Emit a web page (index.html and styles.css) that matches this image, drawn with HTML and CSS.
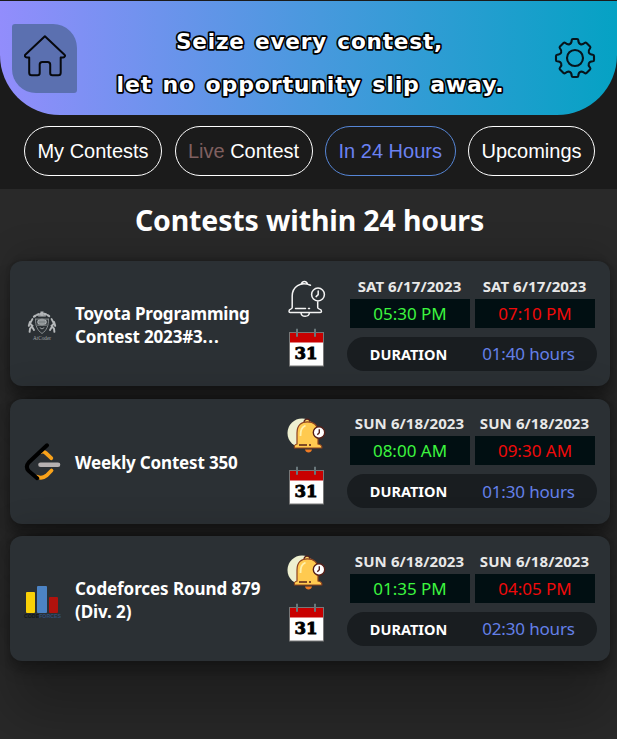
FILE: index.html
```html
<!DOCTYPE html>
<html lang="en">
<head>
<meta charset="utf-8">
<title>Contests</title>
<link rel="stylesheet" href="styles.css">
</head>
<body>
<svg class="defs" width="0" height="0" aria-hidden="true">
  <defs>
    <symbol id="calendar" viewBox="0 0 36 40">
      <rect x="1.5" y="4.5" width="34" height="33.5" fill="#fff" stroke="#777" stroke-width="1"/>
      <rect x="2" y="5" width="33" height="9.5" fill="#c80000"/>
      <path d="M9 .7v8M27 .7v8" stroke="#69777b" stroke-width="2"/>
      <text x="6.500" y="31" class="cal-day" textLength="23" lengthAdjust="spacingAndGlyphs">31</text>
    </symbol>
    <symbol id="bell-outline" viewBox="0 0 40 40">
      <g fill="none" stroke="#f4f4f4" stroke-width="1.5" stroke-linecap="round" stroke-linejoin="round">
        <path d="M14.5 4.7a3 3 0 0 1 5.8 0M23.5 6.2C13.5 1.8 5.2 8 5.2 17v11.5c0 2.2-3.2 1-3.2 3.7 0 .8.4 1.3 1.2 1.3h30c.8 0 1.3-.5 1.3-1.3 0-2.7-3.8-1.5-3.8-3.7V23M8.5 29.5h10M21.5 29.5h1M14 34c.6 4.3 7.7 4.3 8.4 0"/>
        <circle cx="31" cy="15.5" r="6.4"/>
        <path d="M31.2 12v3.6l-2.1 2"/>
      </g>
    </symbol>
    <symbol id="bell-color" viewBox="0 0 40 40">
      <circle cx="15" cy="16" r="14.5" fill="#eef0d0"/>
      <path d="M18 32.500c.6 4 6.400 4 7 0z" fill="#f07b24"/>
      <path d="M17 5.500c0-4.500 6-4.500 6 0" fill="#ffd66b" stroke="#562019" stroke-width="1.3"/>
      <path d="M10 27V16C10 8 14.500 4.800 20.500 4.800S31 8 31 16v11c3 .7 4.300 1.500 3.800 4H7.500C6.900 28.500 7.500 27.800 10 27z" fill="#ffca50" stroke="#8e421f" stroke-width="1.2"/>
      <path d="M13.500 19c0-6 1-8.500 5-10.500" fill="none" stroke="#fff0aa" stroke-width="1.8"/>
      <path d="M12 28h8M22 28h2" stroke="#562019" stroke-width="1.4"/>
      <circle cx="32" cy="15.500" r="5.700" fill="#fff" stroke="#562019" stroke-width="1.4"/>
      <path d="M32.300 12.300v3.400l-2 2" fill="none" stroke="#562019" stroke-width="1.4"/>
    </symbol>
  </defs>
</svg>

<header class="top">
  <div class="banner">
    <a class="home" aria-label="Home">
      <svg width="42" height="42" viewBox="0 0 42 42"><path d="M20.9 1.2 1.3 19.7c-1 1 0 2.7 1.5 2.7h2.4v15.3c0 1.6.9 2.5 2.5 2.5h5.8c1.3 0 2.2-.9 2.2-2.2V29.600c0-1.700.9-2.600 2.600-2.600h5.300c1.700 0 2.600.9 2.600 2.600V38c0 1.300.9 2.200 2.200 2.200h5.800c1.600 0 2.500-.9 2.500-2.500V22.400h2.500c1.500 0 2.400-1.700 1.300-2.700z" fill="none" stroke="#07090e" stroke-width="2" stroke-linejoin="round"/></svg>
    </a>
    <svg class="slogan" width="420" height="90" viewBox="0 0 420 90">
      <text x="74" y="36" textLength="267" lengthAdjust="spacingAndGlyphs">Seize every contest,</text>
      <text x="14.500" y="78.500" textLength="388" lengthAdjust="spacingAndGlyphs">let no opportunity slip away.</text>
    </svg>
    <svg class="gear" width="42" height="42" viewBox="-21 -21 42 42" fill="none" stroke="#07141b" stroke-width="2.1" stroke-linejoin="round">
      <circle r="8"/>
      <path d="M-2-19H2Q3.200-19 3.300-17.800 3.400-14.600 5.500-13.800 7.300-13 9.600-15 10.600-15.800 11.500-15L15-11.500Q15.800-10.600 15-9.600 13-7.300 13.800-5.500 14.600-3.400 17.800-3.300 19-3.200 19-2V2Q19 3.200 17.800 3.300 14.600 3.400 13.800 5.500 13 7.300 15 9.600 15.800 10.600 15 11.500L11.500 15Q10.600 15.800 9.600 15 7.300 13 5.500 13.800 3.400 14.600 3.300 17.800 3.200 19 2 19H-2Q-3.200 19-3.300 17.800-3.400 14.600-5.500 13.800-7.300 13-9.600 15-10.600 15.800-11.500 15L-15 11.500Q-15.800 10.600-15 9.600-13 7.300-13.800 5.500-14.600 3.400-17.800 3.300-19 3.200-19 2V-2Q-19-3.200-17.800-3.300-14.600-3.400-13.800-5.500-13-7.300-15-9.600-15.800-10.600-15-11.500L-11.500-15Q-10.600-15.800-9.600-15-7.300-13-5.500-13.800-3.400-14.600-3.300-17.800-3.200-19-2-19Z"/>
    </svg>
  </div>
  <nav class="tabs">
    <a class="tab tab-my">My Contests</a>
    <a class="tab tab-live"><span class="live">Live</span>&nbsp;Contest</a>
    <a class="tab tab-day active">In 24 Hours</a>
    <a class="tab tab-up">Upcomings</a>
  </nav>
</header>

<main>
  <h1>Contests within 24 hours</h1>
  <div class="list">
    <article class="card">
      <svg class="logo" width="40" height="44" viewBox="0 0 40 44">
        <g transform="translate(3 5.500) scale(.8)" fill="none" stroke="#b4b7b9" stroke-linecap="round">
          <path d="M10 11.500Q20 4 30 11.500" stroke-width="2.800" stroke-dasharray="2 2.600"/>
          <path d="M19 9V6h2v3M16 10.500h8" stroke-width="1.800"/>
          <path d="M12 14.500h16M12 14.500c-.5 8 2 14 8 18 6-4 8.500-10 8-18" stroke-width="1.200" stroke="#8c9193"/>
          <path d="M14.500 22h11M17.500 25.500q2.500 3 5 0" stroke-width="1"/>
          <path d="M8 14.500 5 20l3 3-3 3.500-.5 4M7 23l3 5M5 18l-1.500 5M32 14.500l3 5.500-3 3 3 3.500.5 4M33 23l-3 5M35 18l1.500 5" stroke-width="2.400"/>
        </g>
        <ellipse cx="19" cy="20" rx="5" ry="3.300" fill="#aeb2b4"/>
        <path d="M17 17v6M19 17v6M21 17v6M14 20h10" stroke="#5c6265" stroke-width=".6"/>
        <text x="10" y="38" class="logo-atcoder" textLength="18" lengthAdjust="spacingAndGlyphs">AtCoder</text>
      </svg>
      <h2>Toyota Programming<br>Contest 2023#3<span class="dots">...</span></h2>
      <div class="actions">
        <svg width="40" height="40"><use href="#bell-outline"/></svg>
        <svg class="cal" width="36" height="40"><use href="#calendar"/></svg>
      </div>
      <div class="when">
        <div class="slots">
          <div class="slot"><b>SAT 6/17/2023</b><span class="start">05:30 PM</span></div>
          <div class="slot"><b>SAT 6/17/2023</b><span class="end">07:10 PM</span></div>
        </div>
        <div class="duration"><b>DURATION</b><span>01:40 hours</span></div>
      </div>
    </article>

    <article class="card">
      <svg class="logo" width="40" height="44" viewBox="0 0 40 44" fill="none" stroke-linecap="round">
        <path d="M18 13q2.600-1 4.800 1l5.500 5.200M28.500 31.500l-5 5q-4.500 3.700-9.500 1.300" stroke="#f9a21a" stroke-width="3.800"/>
        <path d="M24 6.300 5.700 23.500q-3.700 4.200 0 8.400l8.500 7.300" stroke="#000" stroke-width="4"/>
        <path d="M17.500 25.700h17.500" stroke="#b6b1b1" stroke-width="4.600"/>
      </svg>
      <h2>Weekly Contest 350</h2>
      <div class="actions">
        <svg width="40" height="40"><use href="#bell-color"/></svg>
        <svg class="cal" width="36" height="40"><use href="#calendar"/></svg>
      </div>
      <div class="when">
        <div class="slots">
          <div class="slot"><b>SUN 6/18/2023</b><span class="start">08:00 AM</span></div>
          <div class="slot"><b>SUN 6/18/2023</b><span class="end">09:30 AM</span></div>
        </div>
        <div class="duration"><b>DURATION</b><span>01:30 hours</span></div>
      </div>
    </article>

    <article class="card">
      <svg class="logo" width="40" height="44" viewBox="0 0 40 44">
        <rect x="3" y="15" width="9" height="21" rx="1" fill="#f9d007"/>
        <rect x="14" y="9" width="10" height="27" rx="1" fill="#4c83c4"/>
        <rect x="26" y="20" width="9" height="16" rx="1" fill="#b1120d"/>
        <text x="1" y="41" class="logo-cf" textLength="37" lengthAdjust="spacingAndGlyphs"><tspan fill="#111619">CODE</tspan><tspan fill="#304e78">FORCES</tspan></text>
      </svg>
      <h2 class="wide">Codeforces Round 879<br>(Div. 2)</h2>
      <div class="actions">
        <svg width="40" height="40"><use href="#bell-color"/></svg>
        <svg class="cal" width="36" height="40"><use href="#calendar"/></svg>
      </div>
      <div class="when">
        <div class="slots">
          <div class="slot"><b>SUN 6/18/2023</b><span class="start">01:35 PM</span></div>
          <div class="slot"><b>SUN 6/18/2023</b><span class="end">04:05 PM</span></div>
        </div>
        <div class="duration"><b>DURATION</b><span>02:30 hours</span></div>
      </div>
    </article>
  </div>
</main>
</body>
</html>
```
FILE: styles.css
```css
* { box-sizing: border-box; }
html { background: #292929; }
body {
  margin: 0;
  height: 739px;
  overflow: hidden;
  background: #292929;
  color: #fff;
  font-family: "Noto Sans", "Open Sans", sans-serif;
}
.defs { display: block; height: 0; }
.top {
  height: 189px;
  padding-top: 1px;
  background: #1b1b1b;
}
.banner {
  display: flex;
  align-items: center;
  height: 114px;
  padding: 0 0 0 12px;
  border-radius: 0 0 60px 60px;
  background: linear-gradient(90deg, #928dfc, #4799dd 52%, #05a2c4);
}
.home {
  display: flex;
  align-items: center;
  justify-content: center;
  width: 65px;
  height: 69px;
  padding-bottom: 5px;
  border-radius: 3px 24px 3px 24px;
  background: #5b70b0;
}
.slogan { margin-left: 25px; }
.slogan text {
  font: bold 21.5px "DejaVu Sans", sans-serif;
  word-spacing: 2px;
  letter-spacing: .8px;
  fill: #fff;
  stroke: #000;
  stroke-width: 3.4px;
  stroke-linejoin: round;
  paint-order: stroke;
}
.gear { margin-left: 32px; }
.tabs {
  display: flex;
  gap: 12.5px;
  padding: 11px 0 0 24px;
}
.tab {
  display: flex;
  align-items: center;
  justify-content: center;
  height: 50px;
  border: 1px solid #fff;
  border-radius: 25px;
  font: 20px "Liberation Sans", Arial, sans-serif;
  white-space: nowrap;
}
.tab-my, .tab-live { width: 138px; }
.tab-day { width: 130.5px; }
.tab-up { width: 127px; }
.live { color: #806060; }
.active { color: #6b82f2; border-color: #5686d6; }
h1 {
  margin: 0;
  height: 72px;
  padding: 11px 0 0 2px;
  font-size: 28.5px;
  font-weight: 700;
  line-height: 40px;
  letter-spacing: -.14px;
  text-align: center;
}
.list {
  display: flex;
  flex-direction: column;
  gap: 12.5px;
  padding: 0 7px 0 10px;
}
.card {
  display: grid;
  grid-template-columns: 52px 212px 60px 250px;
  align-items: center;
  width: 600px;
  height: 125px;
  padding-left: 13px;
  border-radius: 12px;
  background: #2b3034;
  box-shadow: rgba(0, 0, 0, .25) 0 54px 55px, rgba(0, 0, 0, .12) 0 -12px 30px,
    rgba(0, 0, 0, .12) 0 4px 6px, rgba(0, 0, 0, .17) 0 12px 13px,
    rgba(0, 0, 0, .09) 0 -3px 5px;
}
h2 {
  margin: 2px 0 0;
  font-size: 17px;
  font-weight: 700;
  line-height: 23px;
  letter-spacing: -.18px;
  white-space: nowrap;
}
h2.wide { letter-spacing: -.08px; }
.dots { letter-spacing: .9px; }
.actions {
  display: flex;
  flex-direction: column;
  gap: 9px;
}
.cal { margin-left: 1px; }
.when { padding-top: 1px; }
.slots { display: flex; gap: 5px; padding-left: 3px; }
.slot { width: 120px; text-align: center; }
.slot b {
  display: block;
  height: 21px;
  margin-left: -1px;
  color: #e8e8e8;
  font-size: 15px;
  letter-spacing: .08px;
  line-height: 16px;
}
.slot span {
  display: block;
  height: 29px;
  background: #010f12;
  font-size: 17px;
  line-height: 29px;
}
.slot .start { color: #3cf53f; }
.slot .end { color: #f00a0a; }
.duration {
  display: grid;
  grid-template-columns: 123px 117px;
  align-items: center;
  height: 34px;
  margin-top: 9px;
  border-radius: 17px;
  background: #191d20;
  text-align: center;
}
.duration b { font-size: 14.5px; }
.duration span { color: #6480e8; font-size: 17px; letter-spacing: -.15px; }
.cal-day { font: bold 16px "DejaVu Serif", serif; fill: #000; stroke: #000; stroke-width: .9px; }
.logo-atcoder { font: 6px "Liberation Serif", serif; fill: #a2a6a8; }
.logo-cf { font: bold 5.5px "Liberation Sans", sans-serif; }
```
